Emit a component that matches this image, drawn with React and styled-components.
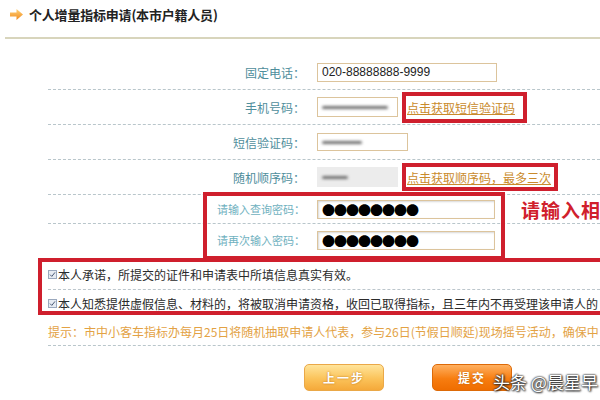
import React from "react";
import styled, { createGlobalStyle } from "styled-components";

const GlobalStyle = createGlobalStyle`
  html, body { margin: 0; padding: 0; background: #fff; overflow: hidden; }
  body { font-family: "Noto Sans CJK SC", "Liberation Sans", sans-serif; }
`;

const Page = styled.div`
  position: relative;
  width: 600px;
  height: 400px;
  overflow: hidden;
  background: #fff;
`;

const Header = styled.div`
  display: flex;
  align-items: center;
  gap: 6px;
  height: 28px;
  padding-left: 10px;
`;

const Title = styled.h1`
  margin: 0;
  font-size: 13px;
  font-weight: bold;
  color: #222;
  letter-spacing: -0.2px;
`;

const Divider = styled.div`
  margin: 9px 0 0 5px;
  height: 2px;
  background: #d8d5bc;
`;

const Form = styled.div`
  position: relative;
  margin: 16px 0 0 48px;
`;

const Row = styled.div`
  display: flex;
  align-items: center;
  height: ${(p) => p.$h || 34}px;
  border-bottom: ${(p) => (p.$noLine ? "none" : "1px dashed #b9c6cb")};
  white-space: nowrap;
`;

const Label = styled.div`
  width: 257px;
  flex: none;
  text-align: right;
  font-size: ${(p) => (p.$small ? 11 : 12)}px;
  color: ${(p) => (p.$light ? "#6fb1c0" : "#4f8e9c")};
`;

const Field = styled.div`
  flex: none;
  display: flex;
  align-items: center;
  box-sizing: border-box;
  margin-left: 12px;
  width: ${(p) => p.$w}px;
  height: ${(p) => p.$fh || 19}px;
  padding-left: 4px;
  border: 1px solid ${(p) => (p.$gray ? "#ececec" : "#dcc49c")};
  background: ${(p) => (p.$gray ? "#ececec" : "#fff")};
  box-shadow: ${(p) => (p.$inset ? "inset 1px 1px 2px #d8d8d8" : "none")};
  font-family: "Liberation Sans", sans-serif;
  font-size: 12px;
  color: #222;
  overflow: hidden;
`;

const Smudge = styled.span`
  display: block;
  width: ${(p) => p.$w}px;
  height: 3px;
  background: #6e6e6e;
  filter: blur(1.4px);
  border-radius: 2px;
`;

const Dots = styled.span`
  font-family: "Noto Sans CJK SC", sans-serif;
  font-size: 13px;
  letter-spacing: -1px;
  color: #000;
  line-height: 1;
`;

const LinkBox = styled.div`
  flex: none;
  margin-left: 4px;
  box-sizing: border-box;
  height: ${(p) => p.$bh}px;
  display: flex;
  align-items: center;
  padding: 0 ${(p) => p.$pr || 8}px 0 1px;
  border: 4px solid #cf1f2d;
`;

const Link = styled.a`
  font-size: 12px;
  color: #c98a2c;
  text-decoration: underline;
`;

const Note = styled.span`
  margin-left: 26px;
  font-size: 19px;
  font-weight: bold;
  color: #d0202c;
  letter-spacing: 1px;
`;

const Spacer = styled.div`
  height: 3px;
`;

const CheckRow = styled.div`
  display: flex;
  align-items: center;
  height: ${(p) => p.$h}px;
  border-bottom: ${(p) => (p.$line ? "1px dashed #bcc6cc" : "none")};
  font-size: 12px;
  color: #2a2a2a;
  white-space: nowrap;
`;

const Box = styled.span`
  flex: none;
  width: 9px;
  height: 9px;
  margin-right: 1px;
  box-sizing: border-box;
  border: 1px solid #9aa8bd;
  background: #e6ebf2;
  display: flex;
  align-items: center;
  justify-content: center;
`;

const Tip = styled.div`
  display: flex;
  align-items: center;
  height: 28px;
  margin-top: 1px;
  border-bottom: 1px dashed #b9c6cb;
  font-size: 12px;
  color: #e3a244;
  white-space: nowrap;
`;

const Buttons = styled.div`
  display: flex;
  gap: 48px;
  margin: 18px 0 0 256px;
`;

const Button = styled.button`
  width: 80px;
  height: 27px;
  border-radius: 5px;
  border: 1px solid ${(p) => (p.$primary ? "#dd6a08" : "#eaa848")};
  background: ${(p) =>
    p.$primary
      ? "linear-gradient(#ffb060, #f77d10 55%, #ef6d00)"
      : "linear-gradient(#ffe49a, #fbc35a 55%, #f5a93a)"};
  color: #fff;
  font-family: "Noto Sans CJK SC", sans-serif;
  font-size: 12px;
  font-weight: bold;
  letter-spacing: 2px;
  text-shadow: 0 0 2px rgba(170, 90, 0, 0.8);
  padding: 0;
`;

const Annotation = styled.div`
  position: absolute;
  left: ${(p) => p.$x}px;
  top: ${(p) => p.$y}px;
  width: ${(p) => p.$w}px;
  height: ${(p) => p.$h}px;
  box-sizing: border-box;
  border: 4px solid #cf1f2d;
  pointer-events: none;
`;

const Watermark = styled.div`
  position: absolute;
  left: 493px;
  top: 369px;
  font-size: 17px;
  color: #fff;
  white-space: nowrap;
  text-shadow: 0 0 2px #222, 0 0 2px #222, 1px 1px 2px #333;
`;

const Arrow = () => (
  <svg width="13" height="11" viewBox="0 0 13 11">
    <defs>
      <linearGradient id="ag" x1="0" y1="0" x2="0" y2="1">
        <stop offset="0" stopColor="#ffd27a" />
        <stop offset="1" stopColor="#f08a1c" />
      </linearGradient>
    </defs>
    <path d="M0 3.5 H6.5 V0 L13 5.5 L6.5 11 V7.5 H0 Z" fill="url(#ag)" />
  </svg>
);

const Check = () => (
  <svg width="7" height="7" viewBox="0 0 7 7">
    <path d="M1 3.6 L2.8 5.4 L6 1.4" fill="none" stroke="#4a5a76" strokeWidth="1" />
  </svg>
);

export default function App() {
  return (
    <Page>
      <GlobalStyle />
      <Header>
        <Arrow />
        <Title>个人增量指标申请(本市户籍人员)</Title>
      </Header>
      <Divider />
      <Form>
        <Row>
          <Label>固定电话：</Label>
          <Field $w={180}>020-88888888-9999</Field>
        </Row>
        <Row>
          <Label>手机号码：</Label>
          <Field $w={81} $fh={20}>
            <Smudge $w={66} />
          </Field>
          <LinkBox $bh={31} $pr={8}>
            <Link>点击获取短信验证码</Link>
          </LinkBox>
        </Row>
        <Row>
          <Label>短信验证码：</Label>
          <Field $w={91} $fh={18}>
            <Smudge $w={40} />
          </Field>
        </Row>
        <Row>
          <Label>随机顺序码：</Label>
          <Field $w={81} $fh={20} $gray>
            <Smudge $w={26} />
          </Field>
          <LinkBox $bh={28} $pr={3}>
            <Link>点击获取顺序码，最多三次</Link>
          </LinkBox>
        </Row>
        <Row $h={28}>
          <Label $small $light>请输入查询密码：</Label>
          <Field $w={178} $inset>
            <Dots>●●●●●●●●</Dots>
          </Field>
          <Note>请输入相</Note>
        </Row>
        <Row $h={32} $noLine>
          <Label $small $light>请再次输入密码：</Label>
          <Field $w={178} $inset>
            <Dots>●●●●●●●●</Dots>
          </Field>
        </Row>
        <Spacer />
        <CheckRow $h={30} $line>
          <Box>
            <Check />
          </Box>
          本人承诺，所提交的证件和申请表中所填信息真实有效。
        </CheckRow>
        <CheckRow $h={26}>
          <Box>
            <Check />
          </Box>
          本人知悉提供虚假信息、材料的，将被取消申请资格，收回已取得指标，且三年内不再受理该申请人的
        </CheckRow>
        <Tip>
          提示：市中小客车指标办每月25日将随机抽取申请人代表，参与26日(节假日顺延)现场摇号活动，确保中
        </Tip>
        <Buttons>
          <Button>上一步</Button>
          <Button $primary>提交</Button>
        </Buttons>
        <Annotation $x={155} $y={137} $w={302} $h={68} />
        <Annotation $x={-10} $y={203} $w={580} $h={57} />
      </Form>
      <Watermark>头条 @晨星早</Watermark>
    </Page>
  );
}
